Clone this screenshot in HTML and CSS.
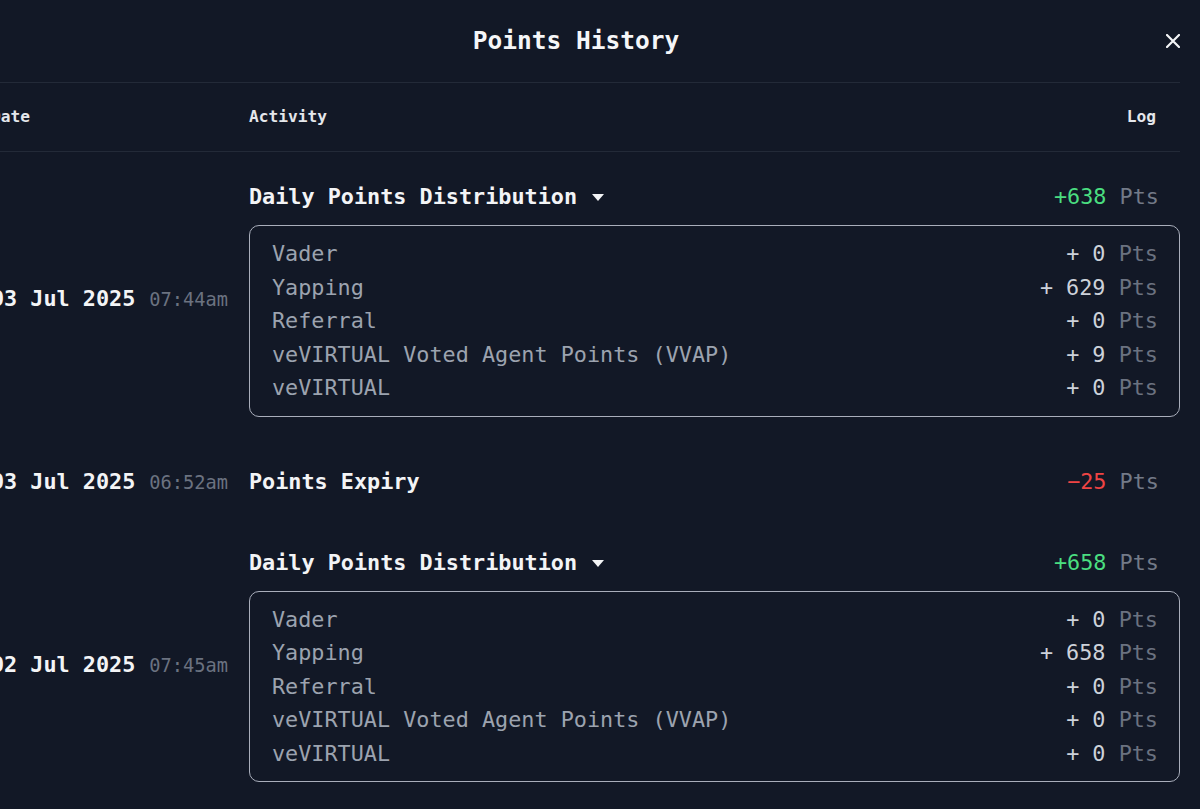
FILE: index.html
```html
<!DOCTYPE html>
<html lang="en">
<head>
<meta charset="utf-8">
<title>Points History</title>
<link rel="stylesheet" href="styles.css">
</head>
<body>
<div class="modal">
  <header class="modal-head">
    <span></span>
    <h1 class="modal-title">Points History</h1>
    <button class="close" aria-label="Close">
      <svg width="14" height="14" viewBox="0 0 14 14"><path d="M1 1L13 13M13 1L1 13" stroke="#f3f4f6" stroke-width="2.2" stroke-linecap="round"/></svg>
    </button>
  </header>

  <div class="thead">
    <span class="th-date">Date</span>
    <span class="th-act">Activity</span>
    <span class="th-log">Log</span>
  </div>

  <div class="row">
    <div class="date"><span class="day">03 Jul 2025</span><span class="time">07:44am</span></div>
    <div class="act">
      <div class="act-line">
        <span class="act-title">Daily Points Distribution<svg class="caret" width="12" height="7" viewBox="0 0 12 7"><path d="M0 0H12L6 7Z" fill="#f3f4f6"/></svg></span>
        <span class="pts"><span class="gain">+638</span> Pts</span>
      </div>
      <div class="breakdown">
        <div class="item"><span>Vader</span><span class="val">+ 0 <span class="unit">Pts</span></span></div>
        <div class="item"><span>Yapping</span><span class="val">+ 629 <span class="unit">Pts</span></span></div>
        <div class="item"><span>Referral</span><span class="val">+ 0 <span class="unit">Pts</span></span></div>
        <div class="item"><span>veVIRTUAL Voted Agent Points (VVAP)</span><span class="val">+ 9 <span class="unit">Pts</span></span></div>
        <div class="item"><span>veVIRTUAL</span><span class="val">+ 0 <span class="unit">Pts</span></span></div>
      </div>
    </div>
  </div>

  <div class="row">
    <div class="date"><span class="day">03 Jul 2025</span><span class="time">06:52am</span></div>
    <div class="act">
      <div class="act-line">
        <span class="act-title">Points Expiry</span>
        <span class="pts"><span class="loss">&minus;25</span> Pts</span>
      </div>
    </div>
  </div>

  <div class="row">
    <div class="date"><span class="day">02 Jul 2025</span><span class="time">07:45am</span></div>
    <div class="act">
      <div class="act-line">
        <span class="act-title">Daily Points Distribution<svg class="caret" width="12" height="7" viewBox="0 0 12 7"><path d="M0 0H12L6 7Z" fill="#f3f4f6"/></svg></span>
        <span class="pts"><span class="gain">+658</span> Pts</span>
      </div>
      <div class="breakdown">
        <div class="item"><span>Vader</span><span class="val">+ 0 <span class="unit">Pts</span></span></div>
        <div class="item"><span>Yapping</span><span class="val">+ 658 <span class="unit">Pts</span></span></div>
        <div class="item"><span>Referral</span><span class="val">+ 0 <span class="unit">Pts</span></span></div>
        <div class="item"><span>veVIRTUAL Voted Agent Points (VVAP)</span><span class="val">+ 0 <span class="unit">Pts</span></span></div>
        <div class="item"><span>veVIRTUAL</span><span class="val">+ 0 <span class="unit">Pts</span></span></div>
      </div>
    </div>
  </div>
</div>
</body>
</html>
```

FILE: styles.css
```css
* { box-sizing: border-box; }

html, body {
  margin: 0;
  padding: 0;
  background: #121826;
  overflow: hidden;
}

body {
  font-family: "DejaVu Sans Mono", "Liberation Mono", monospace;
  color: #f3f4f6;
}

.modal {
  width: 1208px;
  margin-left: -28px;
}

.modal-head {
  height: 83px;
  display: grid;
  grid-template-columns: 1fr auto 1fr;
  align-items: center;
  border-bottom: 1px solid #232a38;
  padding-bottom: 1px;
}

.modal-title {
  margin: 0;
  font-size: 24.5px;
  font-weight: bold;
  color: #f5f6f8;
  line-height: 32px;
}

.close {
  justify-self: end;
  background: none;
  border: 0;
  padding: 0;
  width: 14px;
  height: 14px;
  display: flex;
  cursor: pointer;
}

.thead {
  display: grid;
  grid-template-columns: 258px 1fr auto;
  padding: 24px 24px 24px 19px;
  border-bottom: 1px solid #232a38;
  font-size: 16.2px;
  font-weight: bold;
  line-height: 20px;
  color: #e5e7eb;
}

.row {
  display: grid;
  grid-template-columns: 277px 1fr;
  align-items: center;
  padding: 29px 0 20px 0;
}

.date {
  padding-left: 19px;
  white-space: nowrap;
  display: flex;
  align-items: baseline;
}

.day {
  font-size: 21.8px;
  font-weight: bold;
  color: #f3f4f6;
}

.time {
  margin-left: 14px;
  font-size: 18.7px;
  color: #6b7280;
}

.act-line {
  display: flex;
  justify-content: space-between;
  align-items: center;
  padding-right: 21px;
  line-height: 32px;
  font-size: 21.8px;
}

.act-title {
  font-weight: bold;
  color: #f3f4f6;
  display: flex;
  align-items: center;
}

.caret {
  margin-left: 15px;
  margin-top: 1px;
}

.pts {
  color: #737a88;
}

.gain { color: #4ade80; }
.loss { color: #ef4444; }

.breakdown {
  margin-top: 12px;
  border: 1px solid #a9aebb;
  border-radius: 10px;
  padding: 11px 21px 11px 22px;
  font-size: 21.8px;
}

.item {
  display: flex;
  justify-content: space-between;
  line-height: 33.5px;
  color: #9ca3af;
}

.val {
  color: #cdd2da;
  white-space: pre;
}

.unit {
  color: #6b7280;
}
```
